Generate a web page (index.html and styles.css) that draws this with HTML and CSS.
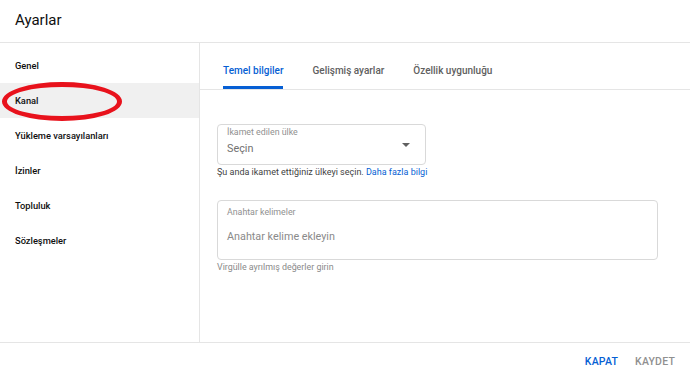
FILE: index.html
```html
<!DOCTYPE html>
<html lang="tr">
<head>
<meta charset="utf-8">
<title>Ayarlar</title>
<link rel="stylesheet" href="styles.css">
</head>
<body>
<div class="dialog">
  <header class="header"><h1 class="title">Ayarlar</h1></header>
  <div class="main">
    <nav class="sidebar">
      <div class="nav-item">Genel</div>
      <div class="nav-item selected">Kanal<span class="annotation"></span></div>
      <div class="nav-item">Yükleme varsayılanları</div>
      <div class="nav-item">İzinler</div>
      <div class="nav-item">Topluluk</div>
      <div class="nav-item">Sözleşmeler</div>
    </nav>
    <section class="content">
      <div class="tabs">
        <div class="tab active">Temel bilgiler</div>
        <div class="tab">Gelişmiş ayarlar</div>
        <div class="tab">Özellik uygunluğu</div>
      </div>
      <div class="form">
        <div class="field select-field">
          <div class="field-text">
            <div class="field-label">İkamet edilen ülke</div>
            <div class="field-value">Seçin</div>
          </div>
          <svg class="arrow" width="8" height="4" viewBox="0 0 10 5"><path d="M0 0 L10 0 L5 5 Z" fill="#606060"/></svg>
        </div>
        <div class="helper">Şu anda ikamet ettiğiniz ülkeyi seçin. <span class="link">Daha fazla bilgi</span></div>
        <div class="field keyword-field">
          <div class="field-label">Anahtar kelimeler</div>
          <div class="field-value placeholder">Anahtar kelime ekleyin</div>
        </div>
        <div class="helper muted">Virgülle ayrılmış değerler girin</div>
      </div>
    </section>
  </div>
  <footer class="footer">
    <span class="btn primary">KAPAT</span>
    <span class="btn disabled">KAYDET</span>
  </footer>
</div>
</body>
</html>
```
FILE: styles.css
```css
html, body {
  margin: 0;
  padding: 0;
  background: #fff;
}
body {
  font-family: Roboto, "Noto Sans", "Liberation Sans", sans-serif;
  color: #0f0f0f;
  width: 690px;
  height: 374px;
  overflow: hidden;
}
.dialog {
  display: flex;
  flex-direction: column;
  height: 374px;
}
.header {
  height: 42px;
  border-bottom: 1px solid #e5e5e5;
  display: flex;
  align-items: center;
  padding-left: 15px;
}
.title {
  margin: 0;
  font-size: 15px;
  font-weight: 400;
  color: #0f0f0f;
  position: relative;
  top: -1px;
}
.main {
  display: flex;
  height: 299px;
}
.sidebar {
  width: 199px;
  border-right: 1px solid #e5e5e5;
  padding-top: 5px;
}
.nav-item {
  position: relative;
  height: 35px;
  display: flex;
  align-items: center;
  padding-left: 15px;
  font-size: 9.3px;
  font-weight: 500;
  color: #0f0f0f;
}
.nav-item.selected {
  background: #f0f0f0;
}
.annotation {
  position: absolute;
  left: 2px;
  top: -1px;
  width: 110px;
  height: 29px;
  border: 5px solid #e8121c;
  border-radius: 50%;
}
.content {
  flex: 1;
  display: flex;
  flex-direction: column;
}
.tabs {
  height: 46px;
  border-bottom: 1px solid #e5e5e5;
  display: flex;
  padding-left: 23px;
  gap: 29px;
}
.tab {
  display: flex;
  align-items: center;
  padding-top: 11px;
  box-sizing: border-box;
  height: 46px;
  font-size: 10px;
  font-weight: 500;
  color: #606060;
  border-bottom: 3px solid transparent;
}
.tab.active {
  color: #065fd4;
  border-bottom-color: #065fd4;
}
.form {
  padding: 34px 0 0 17px;
  display: flex;
  flex-direction: column;
  align-items: flex-start;
}
.field {
  border: 1px solid #d9d9d9;
  border-radius: 4px;
  box-sizing: border-box;
  padding-left: 9px;
}
.select-field {
  width: 209px;
  height: 41px;
  display: flex;
  align-items: flex-start;
  justify-content: space-between;
  padding-right: 15px;
  padding-top: 2px;
}
.field-text {
  display: flex;
  flex-direction: column;
}
.field-label {
  font-size: 8.8px;
  color: #909090;
  line-height: 10px;
}
.field-value {
  font-size: 10.8px;
  color: #717171;
  line-height: 14px;
  margin-top: 5px;
}
.arrow {
  align-self: center;
  margin-top: -1px;
}
.helper {
  font-size: 9px;
  color: #3f3f3f;
  margin-top: 2px;
  line-height: 11px;
}
.helper.muted {
  font-size: 8.9px;
  color: #8a8a8a;
  margin-top: 2px;
  line-height: 11px;
}
.link {
  color: #065fd4;
}
.keyword-field {
  margin-top: 22px;
  width: 441px;
  height: 60px;
  padding-top: 6px;
}
.keyword-field .field-label {
  font-size: 8.8px;
}
.keyword-field .field-value {
  margin-top: 13px;
  font-size: 10.8px;
  color: #8a8a8a;
}
.footer {
  border-top: 1px solid #e5e5e5;
  height: 31px;
  display: flex;
  justify-content: flex-end;
  align-items: center;
  padding-right: 15px;
  gap: 17px;
}
.btn {
  font-size: 10.5px;
  font-weight: 500;
  letter-spacing: 0.2px;
  position: relative;
  top: 3px;
}
.btn.primary {
  color: #065fd4;
}
.btn.disabled {
  color: #909090;
}
```
